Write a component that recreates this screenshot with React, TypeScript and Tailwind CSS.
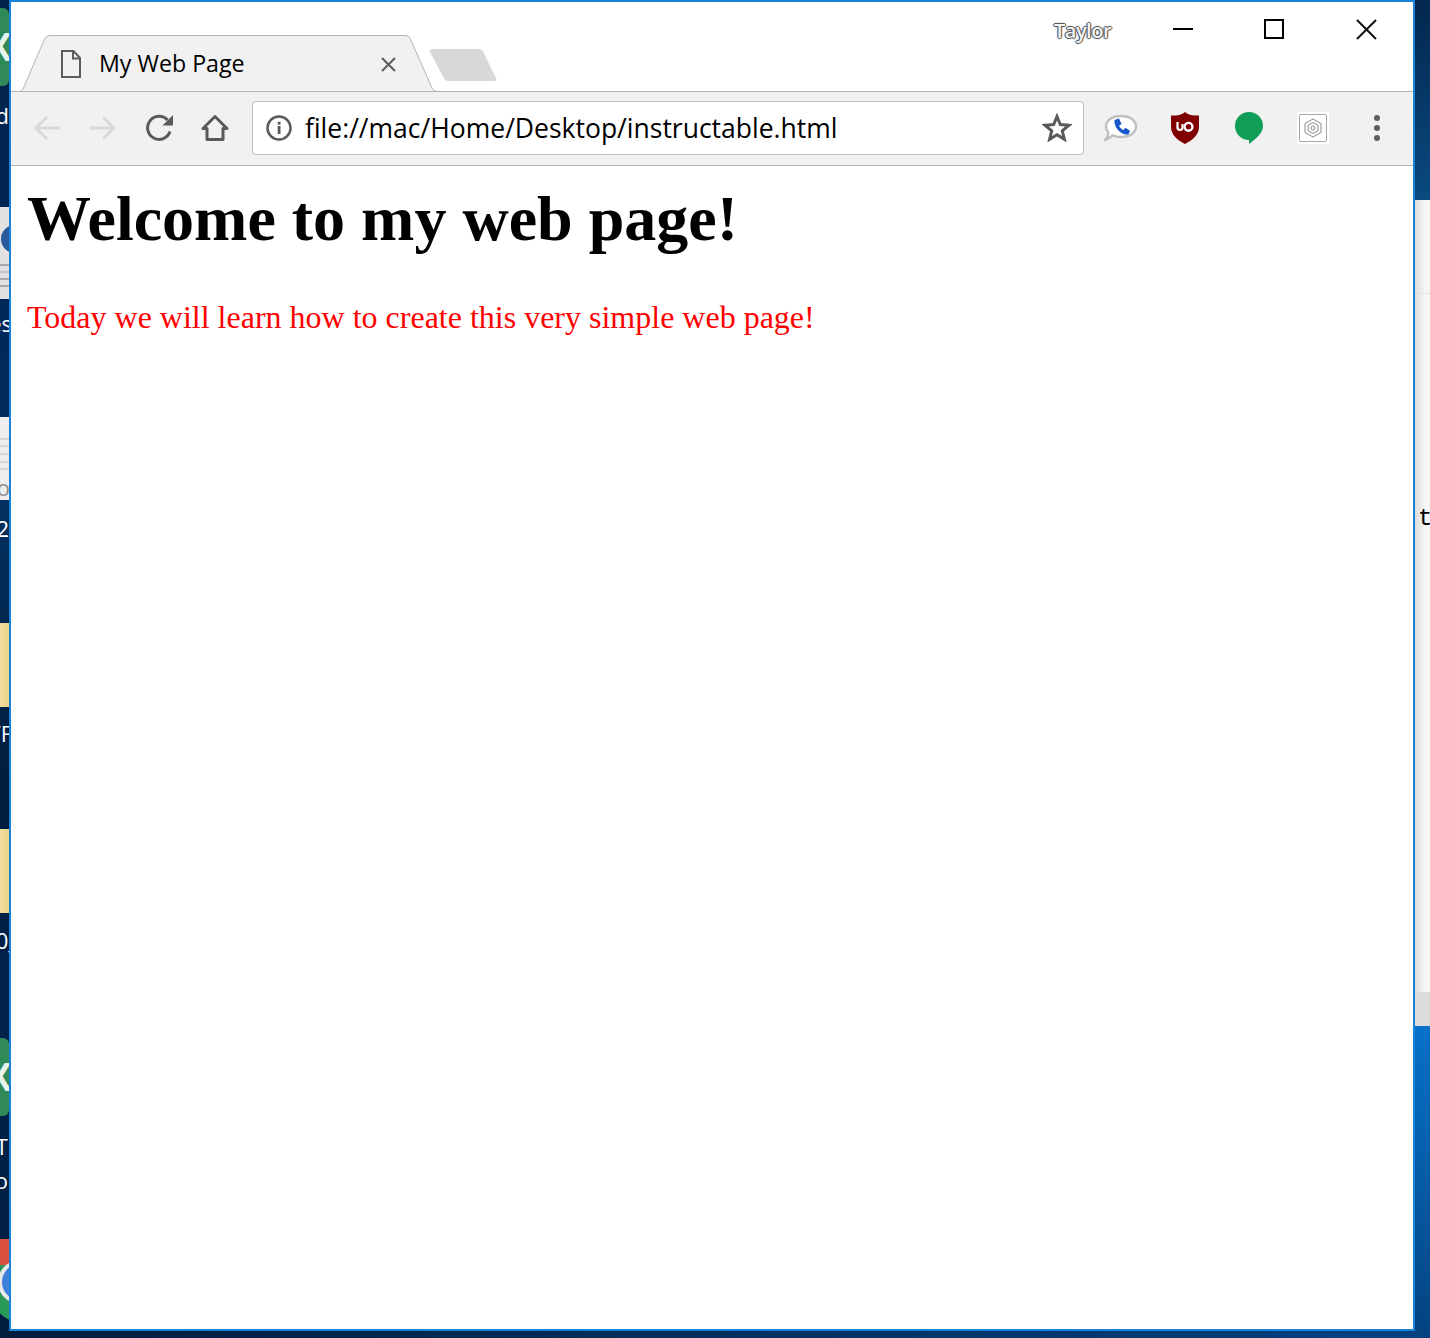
import React from 'react';

const uiFont = "font-['Open_Sans','Noto_Sans',sans-serif]";

function ExcelTile({ className }: { className: string }) {
  return (
    <div className={`flex shrink-0 items-center justify-end w-[9px] h-[78px] rounded-r-[6px] bg-[#2f8a57] overflow-hidden ${className}`}>
      <span className="shrink-0 -mr-[3px] text-[40px] leading-[40px] font-bold text-[#e6f2ea] font-['Liberation_Sans',sans-serif]">X</span>
    </div>
  );
}

function DeskLabel({ text, className }: { text: string; className: string }) {
  return (
    <span className={`self-end shrink-0 text-[22px] leading-[24px] text-white whitespace-nowrap font-['Open_Sans',sans-serif] ${className}`}>{text}</span>
  );
}

function Rule({ color, className }: { color: string; className: string }) {
  return <div className={`w-[9px] h-[2px] shrink-0 ${color} ${className}`} />;
}

// what shows of the desktop icons left of the browser window
function LeftDesktop() {
  return (
    <div className="flex flex-col w-[9px] self-stretch overflow-hidden bg-[linear-gradient(180deg,#03224a_0%,#02285a_25%,#03305f_38%,#021c3c_60%,#02234c_75%,#021d3e_100%)]">
      <ExcelTile className="mt-[8px]" />
      <DeskLabel text="d" className="mt-[17px]" />

      <div className="flex flex-col shrink-0 mt-[80px] w-[9px] h-[92px] bg-[#e2e0e0] overflow-hidden">
        <div className="shrink-0 mt-[18px] ml-[1px] w-[30px] h-[28px] rounded-full bg-[#2a5a9e]" />
        <Rule color="bg-[#a9a6b0]" className="mt-[11px]" />
        <Rule color="bg-[#c6c3ca]" className="mt-[5px]" />
        <Rule color="bg-[#a9a6b0]" className="mt-[5px]" />
        <Rule color="bg-[#a9a6b0]" className="mt-[5px]" />
      </div>
      <DeskLabel text="es" className="mt-[12px] -mr-[3px]" />

      <div className="flex flex-col shrink-0 mt-[82px] w-[9px] h-[83px] bg-[#eeeeee] overflow-hidden">
        <Rule color="bg-[#d6d6d9]" className="mt-[21px]" />
        <Rule color="bg-[#d6d6d9]" className="mt-[5px]" />
        <Rule color="bg-[#d6d6d9]" className="mt-[6px]" />
        <Rule color="bg-[#d6d6d9]" className="mt-[6px]" />
        <Rule color="bg-[#d6d6d9]" className="mt-[5px]" />
        <span className="self-end shrink-0 mt-[5px] -mr-[1px] text-[22px] leading-[24px] text-[#8e8e8e] whitespace-nowrap font-['Open_Sans',sans-serif]">oo</span>
      </div>
      <DeskLabel text="2" className="mt-[16px]" />

      <div className="shrink-0 mt-[83px] w-[9px] h-[84px] bg-[linear-gradient(90deg,#f1dea6,#ecd384)]" />
      <DeskLabel text="TF" className="mt-[14px] -mr-[3px]" />
      <div className="shrink-0 mt-[84px] w-[9px] h-[84px] bg-[linear-gradient(90deg,#f1dea6,#ecd384)]" />
      <DeskLabel text="0_" className="mt-[15px] -mr-[9px]" />

      <ExcelTile className="mt-[86px]" />
      <DeskLabel text="TI" className="mt-[18px] -mr-[5px]" />
      <DeskLabel text="o" className="mt-[10px] mr-[1px]" />

      <svg className="mt-[47px] shrink-0" width="9" height="82" viewBox="0 0 9 82">
        <circle cx="30" cy="41" r="45" fill="#2a9a58" />
        <path d="M-20 0 H9 V26 H-20 Z" fill="#d9503f" />
        <circle cx="30" cy="41" r="45" fill="none" stroke="#03224a" strokeWidth="0" />
        <circle cx="20" cy="43" r="22" fill="#e8e8e8" />
        <circle cx="20" cy="43" r="18" fill="#3f7fdc" />
      </svg>
    </div>
  );
}

// the window behind the browser, seen on the right
function RightDesktop() {
  return (
    <div className="flex flex-col w-[15px] self-stretch pt-[200px] overflow-hidden bg-[linear-gradient(180deg,#03274f_0%,#0a4a80_15%,#0670c8_77%,#0560ad_86%,#04427f_100%)]">
      <div className="flex flex-col w-[15px] h-[826px] bg-[linear-gradient(90deg,#dcdcdc,#f6f6f6_66%)]">
        <div className="mt-[93px] h-[1px] bg-[#e2e2e2]" />
        <span className="mt-[212px] pl-[3px] text-[24px] leading-[26px] text-black font-['Liberation_Mono',monospace]">t</span>
        <div className="mt-auto h-[34px] bg-[#dcdcdc]" />
      </div>
    </div>
  );
}

function TabBar() {
  return (
    <div className="relative flex items-start h-[90px] bg-white border-b-0">
      {/* line under the tab strip, the tab sits on top of it */}
      <div className="absolute left-0 right-0 bottom-0 h-[1px] bg-[#b6b6b6]" />
      <svg className="absolute left-0 top-[32px]" width="500" height="58" viewBox="0 0 500 58">
        <path d="M0 56.5 H8 Q11 56.5 12.5 53 L34 4 Q35.5 1.5 39 1.5 H394 Q397.5 1.5 399 4 L421 53 Q422.5 56.5 426 56.5 H500" fill="#f1f1f1" stroke="none" />
        <path d="M0 57.5 H8 Q11 57.5 12.5 54 L34 4 Q35.5 1.5 39 1.5 H394 Q397.5 1.5 399 4 L421 54 Q422.5 57.5 426 57.5" fill="none" stroke="#b6b6b6" strokeWidth="1" />
        <path d="M422 15 H468 Q471 15 472 17.5 L485 44 Q486 47 483 47 H437 Q434 47 433 44.5 L419 18 Q418 15 422 15 Z" fill="#d8d8d8" />
      </svg>

      <div className="relative flex flex-1 items-start">
        <svg className="ml-[50px] mt-[48px]" width="20" height="28" viewBox="0 0 20 28" fill="none" stroke="#5c5c5c" strokeWidth="2">
          <path d="M1 1 H12.5 L19 8 V27 H1 Z" />
          <path d="M12 1 V8.5 H19" />
        </svg>
        <span className={`w-[146px] ml-[18px] mt-[45px] text-[23.2px] leading-[33px] whitespace-nowrap text-black ${uiFont}`}>My Web Page</span>
        <svg className="ml-[136px] mt-[55px]" width="15" height="15" viewBox="0 0 15 15" stroke="#5c5c5c" strokeWidth="2">
          <path d="M1 1 L14 14 M14 1 L1 14" />
        </svg>
        <span className={`ml-[658px] mt-[13px] text-[20px] tracking-[-0.5px] leading-[32px] font-semibold text-[#f4f4f4] [text-shadow:1px_0_1px_#4a4a4a,-1px_0_1px_#4a4a4a,0_1px_1px_#4a4a4a,0_-1px_1px_#4a4a4a] ${uiFont}`}>Taylor</span>

        <div className="ml-auto flex items-start">
          <div className="w-[91px] h-[54px] flex items-center justify-center">
            <div className="w-[20px] h-[2px] bg-black" />
          </div>
          <div className="w-[91px] h-[54px] flex items-center justify-center">
            <div className="w-[20px] h-[20px] border-2 border-black" />
          </div>
          <div className="w-[94px] h-[54px] flex items-center justify-center">
            <svg width="21" height="21" viewBox="0 0 21 21" stroke="#111" strokeWidth="2">
              <path d="M1 1 L20 20 M20 1 L1 20" />
            </svg>
          </div>
        </div>
      </div>
    </div>
  );
}

function ToolButton({ children }: { children: React.ReactNode }) {
  return <div className="w-[56px] h-[54px] flex items-center justify-center">{children}</div>;
}

function ExtButton({ children }: { children: React.ReactNode }) {
  return <div className="w-[64px] h-[54px] flex items-center justify-center">{children}</div>;
}

function Toolbar() {
  return (
    <div className="flex items-start h-[74px] pt-[9px] pl-[8px] bg-[#f1f1f1] border-b border-[#b6b6b6]">
      <ToolButton>
        <svg width="28" height="26" viewBox="0 0 28 26" fill="none" stroke="#d9d9d9" strokeWidth="3">
          <path d="M27 13 H3 M14 2 L3 13 L14 24" />
        </svg>
      </ToolButton>
      <ToolButton>
        <svg width="28" height="26" viewBox="0 0 28 26" fill="none" stroke="#d9d9d9" strokeWidth="3">
          <path d="M1 13 H25 M14 2 L25 13 L14 24" />
        </svg>
      </ToolButton>
      <ToolButton>
        <svg className="ml-[1px]" width="28" height="28" viewBox="0 0 28 28" fill="none">
          <path d="M24 17.5 A11.5 11.5 0 1 1 21.5 6" stroke="#5a5a5a" strokeWidth="3" />
          <path d="M27 1 V11.5 H16.5 Z" fill="#5a5a5a" />
        </svg>
      </ToolButton>
      <ToolButton>
        <svg width="28" height="28" viewBox="0 0 28 28" fill="none" stroke="#5a5a5a" strokeWidth="3" strokeLinejoin="round">
          <path d="M2 14.5 L14 2.5 L26 14.5 H22 V25.5 H6 V14.5 Z" />
        </svg>
      </ToolButton>

      <div className="ml-[9px] w-[832px] h-[54px] flex items-center rounded-[4px] border border-[#bcbcbc] bg-white">
        <svg className="ml-[13px]" width="26" height="26" viewBox="0 0 26 26" fill="none">
          <circle cx="13" cy="13" r="11.5" stroke="#5a5a5a" strokeWidth="2.5" />
          <rect x="11.7" y="11" width="2.8" height="8" fill="#5a5a5a" />
          <rect x="11.7" y="6.8" width="2.8" height="2.8" fill="#5a5a5a" />
        </svg>
        <span className={`ml-[13px] text-[26.5px] leading-[38px] text-black ${uiFont}`}>file://mac/Home/Desktop/instructable.html</span>
        <svg className="ml-auto mr-[11px] mt-[-2px]" width="30" height="29" viewBox="0 0 30 29" fill="none" stroke="#5a5a5a" strokeWidth="3" strokeLinejoin="miter">
          <path d="M15 3.5 L18.3 11.6 L27 12.2 L20.3 17.8 L22.4 26.3 L15 21.7 L7.6 26.3 L9.7 17.8 L3 12.2 L11.7 11.6 Z" />
        </svg>
      </div>

      <div className="ml-[5px] flex">
        <ExtButton>
          <svg width="34" height="28" viewBox="0 0 34 28">
            <path d="M17 2 C26 2 32 6.5 32 12.5 C32 18.5 26 23 17 23 C13.5 23 11 22.4 8.5 21.4 C6.5 23.5 4 25.3 1 26 C3 24 4.2 21.5 4.3 18.5 C2.8 16.8 2 14.8 2 12.5 C2 6.5 8 2 17 2 Z" fill="#ffffff" stroke="#c0c0c0" strokeWidth="2.4" />
            <path d="M10.5 6 L15 4.5 L17.5 10 L15 11.8 C15.8 13.6 17.4 15.2 19.4 16 L21.4 13.8 L26 16.8 L24.4 20.4 C18 22 9.5 13.5 10.5 6 Z" fill="#1557c9" />
          </svg>
        </ExtButton>
        <ExtButton>
          <svg width="28" height="32" viewBox="0 0 28 32">
            <path d="M14 0 C17 2.5 20 4 28 3.5 V15 C28 23 21 28.5 14 32 C7 28.5 0 23 0 15 V3.5 C8 4 11 2.5 14 0 Z" fill="#800000" />
            <path d="M6.5 10 V15.5 A2.5 2.5 0 0 0 11.5 15.5 V12" fill="none" stroke="#ffffff" strokeWidth="2.2" />
            <circle cx="17.5" cy="14.8" r="3.9" fill="none" stroke="#ffffff" strokeWidth="2.4" />
          </svg>
        </ExtButton>
        <ExtButton>
          <svg width="28" height="32" viewBox="0 0 28 32">
            <path d="M14 0 A14 14 0 0 1 28 14 C28 20.5 23 25 14 32 V28 A14 14 0 0 1 14 0 Z" fill="#0f9d58" />
          </svg>
        </ExtButton>
        <ExtButton>
          <div className="w-[32px] h-[32px] bg-white flex items-center justify-center">
            <div className="w-[28px] h-[28px] rounded-[2px] border border-[#a8a8a8] flex items-center justify-center">
              <svg width="18" height="20" viewBox="0 0 18 20" fill="none" stroke="#8a8a8a" strokeWidth="1">
                <path d="M9 1 L17 5.5 V14.5 L9 19 L1 14.5 V5.5 Z" />
                <path d="M9 4.5 L14 7.3 V12.7 L9 15.5 L4 12.7 V7.3 Z" />
                <circle cx="9" cy="10" r="2" />
              </svg>
            </div>
          </div>
        </ExtButton>
        <ExtButton>
          <div className="flex flex-col gap-[4px]">
            <div className="w-[6px] h-[6px] rounded-full bg-[#5f5f5f]" />
            <div className="w-[6px] h-[6px] rounded-full bg-[#5f5f5f]" />
            <div className="w-[6px] h-[6px] rounded-full bg-[#5f5f5f]" />
          </div>
        </ExtButton>
      </div>
    </div>
  );
}

export default function App() {
  return (
    <div className="flex w-[1430px] h-[1338px] overflow-hidden bg-[linear-gradient(90deg,#021c3c,#04427f)]">
      <LeftDesktop />
      <div className="flex flex-col w-[1406px] h-[1331px] border-2 border-[#1a83d8] bg-white">
        <TabBar />
        <Toolbar />
        <div className="flex-1 pl-[16px] bg-white font-['Liberation_Serif',serif]">
          <h1 className="mt-[16px] text-[64px] leading-[74px] font-bold text-black">Welcome to my web page!</h1>
          <p className="mt-[43px] text-[32px] leading-[37px] text-[#ff0000]">Today we will learn how to create this very simple web page!</p>
        </div>
      </div>
      <RightDesktop />
    </div>
  );
}
